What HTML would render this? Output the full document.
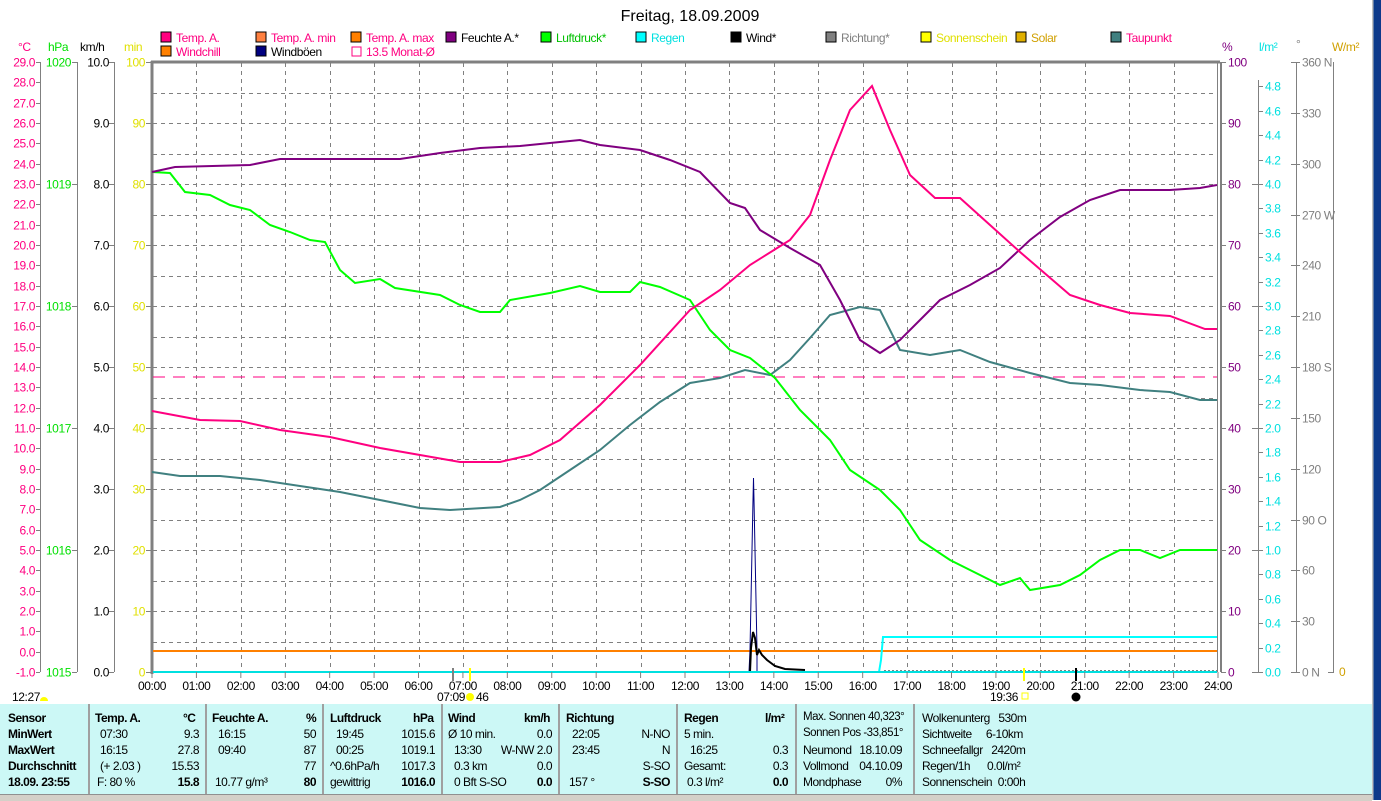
<!DOCTYPE html>
<html><head><meta charset="utf-8">
<style>
html,body{margin:0;padding:0;background:#fff;}
body{width:1381px;height:800px;position:relative;overflow:hidden;font-family:"Liberation Sans",sans-serif;}
svg text{font-family:"Liberation Sans",sans-serif;font-size:12px;letter-spacing:-0.4px;}
#tbl{position:absolute;left:0;top:704px;width:1372px;height:90px;background:#ccf8f6;font-size:12px;letter-spacing:-0.5px;}
.col{position:absolute;top:0;height:90px;border-left:2px solid #a0a0a0;}
.r{position:absolute;white-space:nowrap;}
b{font-weight:bold;}
#status{position:absolute;left:0;top:794px;width:1372px;height:6px;background:#d4d0c8;border-top:1px solid #909090;}
#blue{position:absolute;left:1372px;top:0;width:9px;height:800px;background:linear-gradient(90deg,#c0c0c0 0,#c0c0c0 1px,#0a3a8a 2px,#10388a 100%);}
</style></head><body>
<svg width="1381" height="704" style="position:absolute;left:0;top:0">
<text x="690" y="21" text-anchor="middle" style="font-size:16px;letter-spacing:0">Freitag, 18.09.2009</text>
<g>
<rect x="161" y="32" width="10" height="10" fill="#ff0080" stroke="#000"/><text x="176" y="42" fill="#ff0080">Temp. A.</text>
<rect x="256" y="32" width="10" height="10" fill="#ff8040" stroke="#000"/><text x="271" y="42" fill="#ff0080">Temp. A. min</text>
<rect x="351" y="32" width="10" height="10" fill="#ff8000" stroke="#000"/><text x="366" y="42" fill="#ff0080">Temp. A. max</text>
<rect x="446" y="32" width="10" height="10" fill="#800080" stroke="#000"/><text x="461" y="42" fill="#000">Feuchte A.*</text>
<rect x="541" y="32" width="10" height="10" fill="#00ff00" stroke="#000"/><text x="556" y="42" fill="#00c000">Luftdruck*</text>
<rect x="636" y="32" width="10" height="10" fill="#00ffff" stroke="#000"/><text x="651" y="42" fill="#00e0e0">Regen</text>
<rect x="731" y="32" width="10" height="10" fill="#000" stroke="#000"/><text x="746" y="42" fill="#000">Wind*</text>
<rect x="826" y="32" width="10" height="10" fill="#808080" stroke="#000"/><text x="841" y="42" fill="#808080">Richtung*</text>
<rect x="921" y="32" width="10" height="10" fill="#ffff00" stroke="#000"/><text x="936" y="42" fill="#e0e000">Sonnenschein</text>
<rect x="1016" y="32" width="10" height="10" fill="#e0b000" stroke="#000"/><text x="1031" y="42" fill="#d0a000">Solar</text>
<rect x="1111" y="32" width="10" height="10" fill="#408080" stroke="#000"/><text x="1126" y="42" fill="#ff0080">Taupunkt</text>
<rect x="161" y="46" width="10" height="10" fill="#ff8000" stroke="#000"/><text x="176" y="56" fill="#ff0080">Windchill</text>
<rect x="256" y="46" width="10" height="10" fill="#000080" stroke="#000"/><text x="271" y="56" fill="#000">Windböen</text>
<path d="M352 47h9v9h-9z" fill="none" stroke="#ff0080"/><text x="366" y="56" fill="#ff0080">13.5 Monat-Ø</text>
</g>
<text x="18" y="51" fill="#ff0080">°C</text>
<text x="48" y="51" fill="#00e000">hPa</text>
<text x="80" y="51" fill="#000">km/h</text>
<text x="124" y="51" fill="#e0e000">min</text>
<text x="1222" y="51" fill="#800080">%</text>
<text x="1259" y="51" fill="#00e0e0">l/m²</text>
<text x="1296" y="48" fill="#808080">°</text>
<text x="1332" y="51" fill="#d0a000">W/m²</text>
<g stroke="#808080" stroke-width="1">
<line x1="40.5" y1="62" x2="40.5" y2="672"/><line x1="77.5" y1="62" x2="77.5" y2="672"/><line x1="114.5" y1="62" x2="114.5" y2="672"/>
<line x1="1258.5" y1="80" x2="1258.5" y2="672"/><line x1="1296.5" y1="62" x2="1296.5" y2="672"/><line x1="1333.5" y1="62" x2="1333.5" y2="672"/>
</g>
<g id="lax"></g>
<g id="grid" stroke="#808080" stroke-dasharray="4,4" stroke-width="1"></g>
<line x1="151" y1="62" x2="1220" y2="62" stroke="#808080" stroke-width="3"/>
<line x1="152" y1="61" x2="152" y2="674" stroke="#808080" stroke-width="3"/>
<line x1="1217.5" y1="62" x2="1217.5" y2="672" stroke="#808080"/>
<line x1="1221" y1="62" x2="1221" y2="672" stroke="#808080" stroke-width="2"/>
<line x1="153" y1="377" x2="1217" y2="377" stroke="#ff0080" stroke-dasharray="12,8"/>
<line x1="153" y1="651" x2="1217" y2="651" stroke="#ff8000" stroke-width="2"/>
<polyline fill="none" stroke="#00ffff" stroke-width="2" points="153,672 879,672 881,660 883,637 1217,637"/>
<line x1="884" y1="671" x2="1217" y2="671" stroke="#000" stroke-dasharray="2,2"/>
<polyline fill="none" stroke="#000080" stroke-width="1" points="749,672 750,650 751,600 752,550 753,500 753.5,478 754,500 755,550 756,600 757,650 757,672"/>
<polyline fill="none" stroke="#000" stroke-width="2" points="750,672 751,648 753,632 755,638 757,655 759,650 762,655 767,660 775,666 785,669 805,670"/>
<polyline fill="none" stroke="#408080" stroke-width="2" points="152,472 180,476 220,476 260,480 300,486 340,492 380,500 420,508 450,510 500,507 520,500 540,490 570,470 600,450 630,425 660,402 690,383 720,378 745,370 770,375 790,360 810,338 830,315 860,307 880,310 900,350 930,355 960,350 990,362 1030,373 1070,383 1100,385 1140,390 1170,392 1200,400 1217,400"/>
<polyline fill="none" stroke="#00ff00" stroke-width="2" points="152,172 170,173 185,192 210,195 230,205 250,210 270,225 290,232 310,240 325,242 340,270 355,283 380,279 395,288 440,295 460,305 480,312 500,312 510,300 550,293 580,286 600,292 630,292 640,282 660,287 690,300 710,330 730,350 750,358 775,378 800,410 830,440 850,470 880,490 900,510 920,540 950,560 980,575 1000,585 1020,578 1030,590 1060,585 1080,575 1100,560 1120,550 1140,550 1160,558 1180,550 1210,550 1217,550"/>
<polyline fill="none" stroke="#800080" stroke-width="2" points="152,172 175,167 250,165 280,159 340,159 400,159 440,153 480,148 520,146 560,142 580,140 600,145 640,150 670,160 700,172 730,203 745,208 760,230 790,248 820,265 840,300 860,340 880,353 900,340 920,320 940,300 970,285 1000,268 1030,240 1060,217 1090,200 1120,190 1170,190 1200,188 1217,185"/>
<polyline fill="none" stroke="#ff0080" stroke-width="2" points="152,411 200,420 240,421 280,430 330,437 380,448 420,455 460,462 500,462 530,455 560,440 600,405 640,365 690,310 720,290 750,265 790,240 810,215 830,160 850,110 872,86 890,130 910,175 935,198 960,198 990,225 1020,252 1070,295 1100,305 1130,313 1170,316 1205,329 1217,329"/>
<line x1="153" y1="672" x2="1217" y2="672" stroke="#00e0e0" stroke-width="2"/>
<line x1="453" y1="668" x2="453" y2="681" stroke="#808080" stroke-width="2"/>
<line x1="470" y1="668" x2="470" y2="681" stroke="#ffff00" stroke-width="2"/>
<line x1="1024" y1="668" x2="1024" y2="681" stroke="#ffff00" stroke-width="2"/>
<line x1="1076" y1="668" x2="1076" y2="681" stroke="#000" stroke-width="2"/>
<g id="hours"></g>
<text x="12" y="701">12:27</text><path d="M40 701a4 4 0 0 1 8 0z" fill="#ffff00"/>
<text x="437" y="701">07:09</text><circle cx="470" cy="697" r="4" fill="#ffff00"/><text x="476" y="701">46</text>
<text x="990" y="701">19:36</text><rect x="1022" y="693" width="6" height="6" fill="none" stroke="#ffff00"/>
<circle cx="1076" cy="697" r="4.5" fill="#000"/>
</svg>
<div id="tbl">
<div class="col" style="left:88px"></div><div class="col" style="left:205px"></div><div class="col" style="left:322px"></div><div class="col" style="left:441px"></div><div class="col" style="left:558px"></div><div class="col" style="left:676px"></div><div class="col" style="left:795px"></div><div class="col" style="left:913px"></div>
<div class="r" style="left:8px;top:7px"><b>Sensor</b></div>
<div class="r" style="left:8px;top:23px"><b>MinWert</b></div>
<div class="r" style="left:8px;top:39px"><b>MaxWert</b></div>
<div class="r" style="left:8px;top:55px"><b>Durchschnitt</b></div>
<div class="r" style="left:8px;top:71px"><b>18.09. 23:55</b></div>

<div class="r" style="left:95px;top:7px"><b>Temp. A.</b></div><div class="r" style="left:183px;top:7px"><b>°C</b></div>
<div class="r" style="left:100px;top:23px">07:30</div><div class="r" style="right:1173px;top:23px">9.3</div>
<div class="r" style="left:100px;top:39px">16:15</div><div class="r" style="right:1173px;top:39px">27.8</div>
<div class="r" style="left:100px;top:55px">(+ 2.03 )</div><div class="r" style="right:1173px;top:55px">15.53</div>
<div class="r" style="left:97px;top:71px">F: 80 %</div><div class="r" style="right:1173px;top:71px"><b>15.8</b></div>

<div class="r" style="left:212px;top:7px"><b>Feuchte A.</b></div><div class="r" style="left:306px;top:7px"><b>%</b></div>
<div class="r" style="left:218px;top:23px">16:15</div><div class="r" style="right:1056px;top:23px">50</div>
<div class="r" style="left:218px;top:39px">09:40</div><div class="r" style="right:1056px;top:39px">87</div>
<div class="r" style="right:1056px;top:55px">77</div>
<div class="r" style="left:215px;top:71px">10.77 g/m³</div><div class="r" style="right:1056px;top:71px"><b>80</b></div>

<div class="r" style="left:330px;top:7px"><b>Luftdruck</b></div><div class="r" style="left:413px;top:7px"><b>hPa</b></div>
<div class="r" style="left:336px;top:23px">19:45</div><div class="r" style="right:937px;top:23px">1015.6</div>
<div class="r" style="left:336px;top:39px">00:25</div><div class="r" style="right:937px;top:39px">1019.1</div>
<div class="r" style="left:330px;top:55px">^0.6hPa/h</div><div class="r" style="right:937px;top:55px">1017.3</div>
<div class="r" style="left:330px;top:71px">gewittrig</div><div class="r" style="right:937px;top:71px"><b>1016.0</b></div>

<div class="r" style="left:448px;top:7px"><b>Wind</b></div><div class="r" style="left:524px;top:7px"><b>km/h</b></div>
<div class="r" style="left:448px;top:23px">Ø 10 min.</div><div class="r" style="right:820px;top:23px">0.0</div>
<div class="r" style="left:454px;top:39px">13:30</div><div class="r" style="right:820px;top:39px">W-NW 2.0</div>
<div class="r" style="left:454px;top:55px">0.3 km</div><div class="r" style="right:820px;top:55px">0.0</div>
<div class="r" style="left:454px;top:71px">0 Bft S-SO</div><div class="r" style="right:820px;top:71px"><b>0.0</b></div>

<div class="r" style="left:566px;top:7px"><b>Richtung</b></div>
<div class="r" style="left:572px;top:23px">22:05</div><div class="r" style="right:702px;top:23px">N-NO</div>
<div class="r" style="left:572px;top:39px">23:45</div><div class="r" style="right:702px;top:39px">N</div>
<div class="r" style="right:702px;top:55px">S-SO</div>
<div class="r" style="left:569px;top:71px">157 °</div><div class="r" style="right:702px;top:71px"><b>S-SO</b></div>

<div class="r" style="left:684px;top:7px"><b>Regen</b></div><div class="r" style="left:765px;top:7px"><b>l/m²</b></div>
<div class="r" style="left:684px;top:23px">5 min.</div>
<div class="r" style="left:690px;top:39px">16:25</div><div class="r" style="right:584px;top:39px">0.3</div>
<div class="r" style="left:684px;top:55px">Gesamt:</div><div class="r" style="right:584px;top:55px">0.3</div>
<div class="r" style="left:687px;top:71px">0.3 l/m²</div><div class="r" style="right:584px;top:71px"><b>0.0</b></div>

<div class="r" style="left:803px;top:7px;font-size:11.5px">Max. Sonnen 40,323°</div>
<div class="r" style="left:803px;top:23px;font-size:11.5px">Sonnen Pos -33,851°</div>
<div class="r" style="left:803px;top:39px">Neumond</div><div class="r" style="right:470px;top:39px">18.10.09</div>
<div class="r" style="left:803px;top:55px">Vollmond</div><div class="r" style="right:470px;top:55px">04.10.09</div>
<div class="r" style="left:803px;top:71px">Mondphase</div><div class="r" style="right:470px;top:71px">0%</div>

<div class="r" style="left:922px;top:7px">Wolkenunterg&nbsp;&nbsp; 530m</div>
<div class="r" style="left:922px;top:23px">Sichtweite&nbsp;&nbsp;&nbsp;&nbsp; 6-10km</div>
<div class="r" style="left:922px;top:39px">Schneefallgr&nbsp;&nbsp; 2420m</div>
<div class="r" style="left:922px;top:55px">Regen/1h&nbsp;&nbsp;&nbsp;&nbsp;&nbsp; 0.0l/m²</div>
<div class="r" style="left:922px;top:71px">Sonnenschein&nbsp; 0:00h</div>
</div>
<div id="status"></div>
<div id="blue"></div>
<script>
(function(){
var ns="http://www.w3.org/2000/svg";
function t(g,x,y,s,c,a){var e=document.createElementNS(ns,"text");e.setAttribute("x",x);e.setAttribute("y",y);e.setAttribute("fill",c);if(a)e.setAttribute("text-anchor",a);e.textContent=s;g.appendChild(e);}
function l(g,x1,y1,x2,y2,c){var e=document.createElementNS(ns,"line");e.setAttribute("x1",x1);e.setAttribute("y1",y1);e.setAttribute("x2",x2);e.setAttribute("y2",y2);e.setAttribute("stroke",c||"#808080");g.appendChild(e);}
var g=document.getElementById("lax"),gr=document.getElementById("grid"),h=document.getElementById("hours");
for(var i=0;i<=30;i++){var y=62+i*610/30;y=Math.round(y)+0.5;t(g,35,y+4,(29-i).toFixed(1),"#ff0080","end");l(g,36,y,40,y);}
for(var i=0;i<=5;i++){var y=62+i*122+0.5;t(g,71,y+4,String(1020-i),"#00e000","end");l(g,72,y,77,y);}
for(var i=0;i<=10;i++){var y=62+i*61+0.5;t(g,109,y+4,(10-i).toFixed(1),"#000","end");l(g,109,y,114,y);t(g,145,y+4,String(100-i*10),"#e0e000","end");l(g,146,y,151,y);
t(g,1228,y+4,String(100-i*10),"#800080");l(g,1221,y,1226,y);}
for(var i=0;i<=24;i++){var v=i*0.2;var y=Math.round(672-i*24.4)+0.5;if(v>4.85)continue;t(g,1265,y+4,v.toFixed(1),"#00e0e0");l(g,i%5==0?1252:1258,y,1263,y);}
var dl=["0 N","30","60","90 O","120","150","180 S","210","240","270 W","300","330","360 N"];
for(var i=0;i<=12;i++){var y=Math.round(672-i*610/12)+0.5;t(g,1302,y+4,dl[i],"#808080");l(g,1291,y,1300,y);}
t(g,1339,676,"0","#d0a000");l(g,1328,672.5,1334,672.5);
for(var i=1;i<20;i++){var y=Math.round(62+i*30.5)+0.5;l(gr,153,y,1217,y);}
for(var i=1;i<24;i++){var x=Math.round(152+i*1066/24)+0.5;l(gr,x,63,x,671);}
for(var i=0;i<=24;i++){var x=152+i*1066/24;t(h,x,690,(i<10?"0":"")+i+":00","#000","middle");l(h,x,672,x,678,"#808080");}
})();
</script>
</body></html>
